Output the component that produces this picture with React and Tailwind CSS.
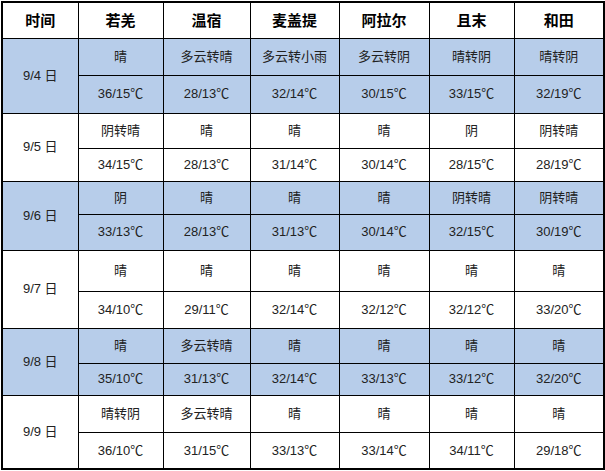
const CITIES = ["若羌", "温宿", "麦盖提", "阿拉尔", "且末", "和田"];
const WIDTHS = ["w-[76px]", "w-[85px]", "w-[87px]", "w-[89px]", "w-[90px]", "w-[85px]", "w-[90px]"];

const DAYS = [
  {
    date: "9/4 日", blue: true, h: ["h-[37px]", "h-[38px]"],
    weather: ["晴", "多云转晴", "多云转小雨", "多云转阴", "晴转阴", "晴转阴"],
    temp: ["36/15℃", "28/13℃", "32/14℃", "30/15℃", "33/15℃", "32/19℃"],
  },
  {
    date: "9/5 日", blue: false, h: ["h-[35px]", "h-[33px]"],
    weather: ["阴转晴", "晴", "晴", "晴", "阴", "阴转晴"],
    temp: ["34/15℃", "28/13℃", "31/14℃", "30/14℃", "28/15℃", "28/19℃"],
  },
  {
    date: "9/6 日", blue: true, h: ["h-[33px]", "h-[36px]"],
    weather: ["阴", "晴", "晴", "晴", "阴转晴", "阴转晴"],
    temp: ["33/13℃", "28/13℃", "31/13℃", "30/14℃", "32/15℃", "30/19℃"],
  },
  {
    date: "9/7 日", blue: false, h: ["h-[41px]", "h-[37px]"],
    weather: ["晴", "晴", "晴", "晴", "晴", "晴"],
    temp: ["34/10℃", "29/11℃", "32/14℃", "32/12℃", "32/12℃", "33/20℃"],
  },
  {
    date: "9/8 日", blue: true, h: ["h-[35px]", "h-[32px]"],
    weather: ["晴", "多云转晴", "晴", "晴", "晴", "晴"],
    temp: ["35/10℃", "31/13℃", "32/14℃", "33/13℃", "33/12℃", "32/20℃"],
  },
  {
    date: "9/9 日", blue: false, h: ["h-[37px]", "h-[37px]"],
    weather: ["晴转阴", "多云转晴", "晴", "晴", "晴", "晴"],
    temp: ["36/10℃", "31/15℃", "33/13℃", "33/14℃", "34/11℃", "29/18℃"],
  },
];

const cell = "border border-black text-center align-middle p-0";

export default function App() {
  return (
    <div className="bg-white w-[605px] h-[471px] pt-px pl-px font-['Liberation_Sans','Noto_Sans_CJK_SC',sans-serif] text-[13px] text-[#222]">
      <table className="border-collapse table-fixed border-2 border-black w-[603px]">
        <colgroup>
          {WIDTHS.map((w, i) => <col key={i} className={w} />)}
        </colgroup>
        <thead>
          <tr className="h-[36px]">
            <th className={`${cell} text-[15px] font-bold text-black font-['Noto_Sans_CJK_SC',sans-serif]`}>时间</th>
            {CITIES.map((c) => (
              <th key={c} className={`${cell} text-[15px] font-bold text-black font-['Noto_Sans_CJK_SC',sans-serif]`}>{c}</th>
            ))}
          </tr>
        </thead>
        <tbody>
          {DAYS.map((d) => {
            const bg = d.blue ? "bg-[#b7cdea]" : "bg-white";
            return [
              <tr key={d.date + "w"} className={`${d.h[0]} ${bg}`}>
                <td rowSpan={2} className={cell}>{d.date}</td>
                {d.weather.map((w, i) => <td key={i} className={cell}>{w}</td>)}
              </tr>,
              <tr key={d.date + "t"} className={`${d.h[1]} ${bg}`}>
                {d.temp.map((t, i) => <td key={i} className={cell}>{t}</td>)}
              </tr>,
            ];
          })}
        </tbody>
      </table>
    </div>
  );
}
